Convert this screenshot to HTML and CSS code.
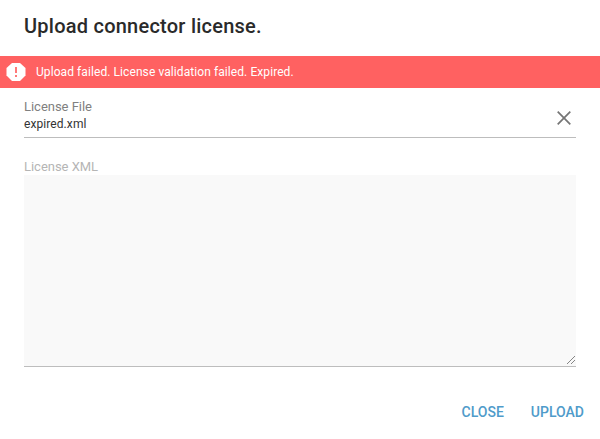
FILE: index.html
```html
<!DOCTYPE html>
<html lang="en">
<head>
<meta charset="utf-8">
<title>Upload connector license</title>
<link rel="stylesheet" href="styles.css">
</head>
<body>
<main class="dialog">
  <h1 class="title">Upload connector license.</h1>
  <div class="alert">
    <svg class="alert-icon" viewBox="0 0 20 20"><path fill="#fff" d="M6 1h8l5.500 5v7.500L14 19H6L.5 13.500V6z"/><path fill="#ff6161" opacity=".85" d="M9 5h2v6H9zM9 13h2v2H9z"/></svg>
    <span>Upload failed. License validation failed. Expired.</span>
  </div>
  <div class="file-field">
    <div class="file-text">
      <label class="file-label">License File</label>
      <span class="file-name">expired.xml</span>
    </div>
    <svg class="clear" viewBox="0 0 14 14"><path d="M.7.7l12.600 12.600M13.300.7L.7 13.300"/></svg>
  </div>
  <label class="xml-label">License XML</label>
  <div class="xml-box">
    <svg class="grip" viewBox="0 0 10 10"><path d="M1 8L9 0M5 8L9 4"/></svg>
  </div>
  <footer class="actions">
    <button class="action">CLOSE</button>
    <button class="action">UPLOAD</button>
  </footer>
</main>
</body>
</html>
```
FILE: styles.css
```css
* { box-sizing: border-box; }
body { margin: 0; background: #fff; font-family: Roboto, sans-serif; color: #2a2a2a; }
.dialog { width: 600px; height: 439px; display: flex; flex-direction: column; overflow: hidden; }
.title { margin: 0; height: 56px; padding: 14px 24px 0; font-size: 20px; font-weight: 500; line-height: 24px; letter-spacing: .24px; }
.alert { height: 32px; background: #ff6161; color: #fff; display: flex; align-items: center; gap: 10px; padding-left: 6px; font-size: 12px; letter-spacing: .08px; }
.alert-icon { width: 20px; height: 20px; }
.file-field { margin: 0 24px; height: 50px; border-bottom: 1px solid #bdbdbd; display: flex; justify-content: space-between; padding: 11px 5px 0 0; }
.file-text { display: flex; flex-direction: column; }
.file-label { font-size: 13px; line-height: 16px; color: #808080; letter-spacing: -.03px; }
.file-name { font-size: 12px; line-height: 18px; letter-spacing: .08px; color: #333; }
.clear { width: 14px; height: 14px; margin-top: 12px; fill: none; stroke: #757575; stroke-width: 1.700; }
.xml-label { margin: 21px 24px 0; font-size: 13px; line-height: 16px; color: #b5b5b5; letter-spacing: -.03px; }
.xml-box { margin: 0 24px; height: 192px; background: #f9f9f9; border-bottom: 1px solid #bdbdbd; display: flex; justify-content: flex-end; align-items: flex-end; }
.grip { width: 10px; height: 10px; fill: none; stroke: #777; stroke-width: .9; }
.actions { margin-top: 33px; padding-right: 16px; display: flex; justify-content: flex-end; gap: 27px; }
.action { border: 0; padding: 0; background: none; color: #4f9bca; font: 500 14px/24px Roboto, sans-serif; }
```
